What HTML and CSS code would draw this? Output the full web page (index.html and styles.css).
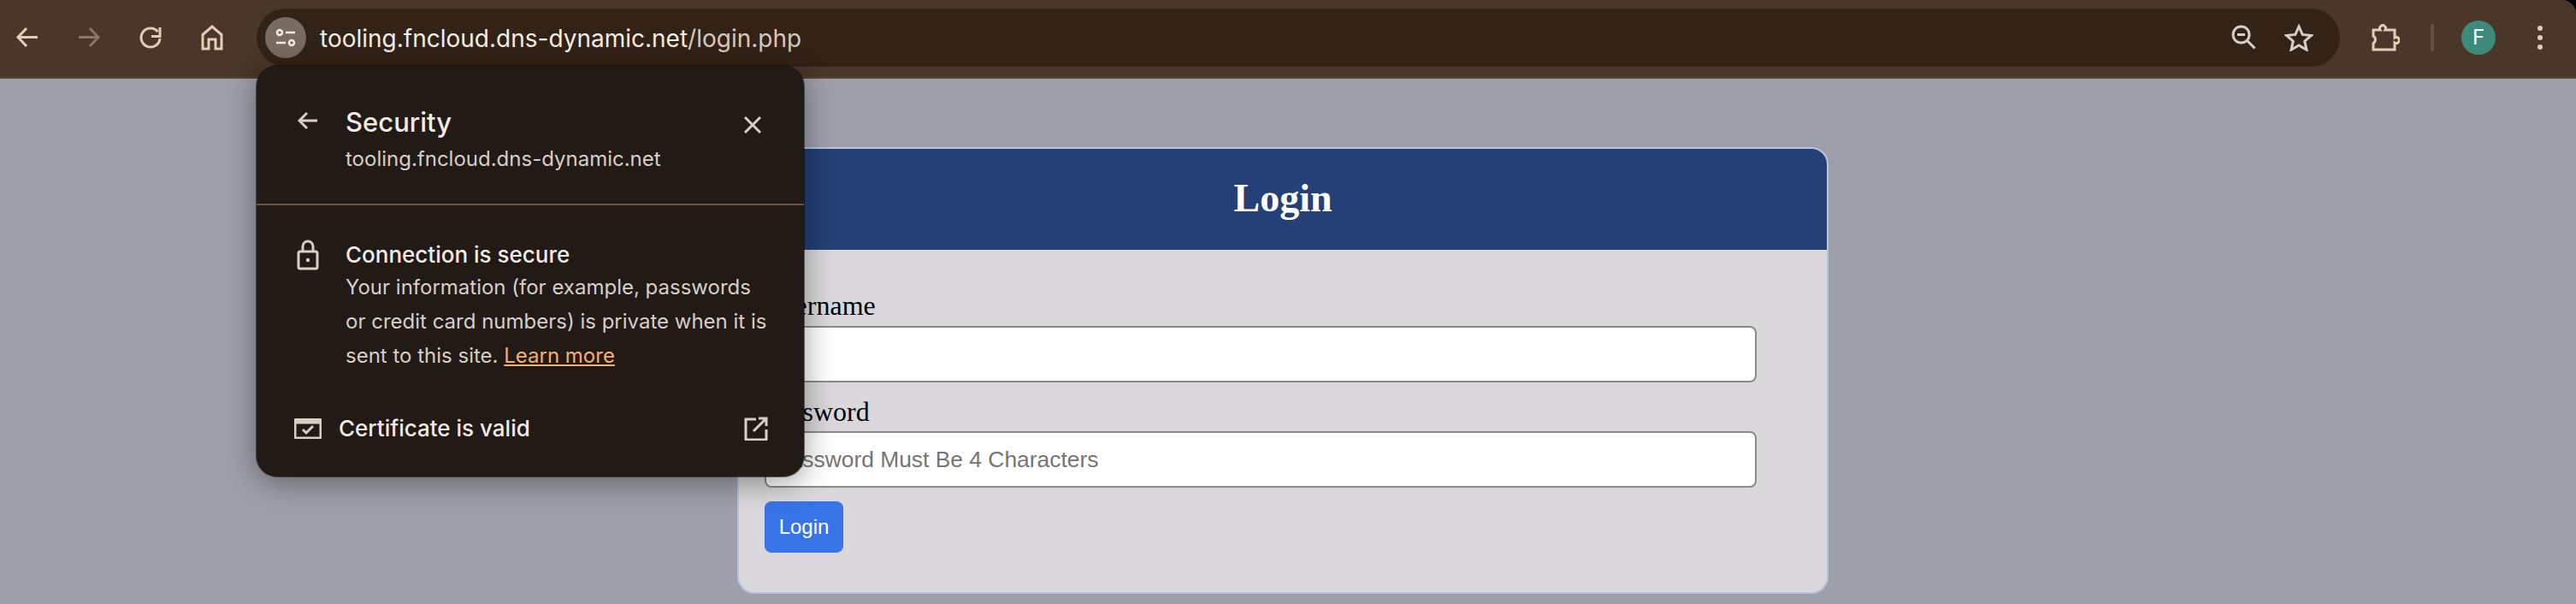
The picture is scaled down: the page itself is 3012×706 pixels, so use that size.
FILE: index.html
```html
<!DOCTYPE html>
<html lang="en">
<head>
<meta charset="utf-8">
<title>Login</title>
<link rel="stylesheet" href="styles.css">
</head>
<body>
<div class="window">
  <header class="toolbar">
    <div class="nav">
      <button class="tool"><svg width="28" height="28" viewBox="0 0 28 28"><path d="M26 13.500H4M13 3 3 13.500 13 24" class="st"/></svg></button>
      <button class="tool dim"><svg width="28" height="28" viewBox="0 0 28 28"><path d="M2 13.500h22M15 3l10 10.500L15 24" class="st"/></svg></button>
      <button class="tool"><svg width="28" height="30" viewBox="0 0 28 30"><path d="M22.500 8A11 11 0 1 0 25 16" class="st"/><path d="M25 3v10.500H15" class="st"/></svg></button>
      <button class="tool"><svg width="28" height="30" viewBox="0 0 28 30"><path d="M3 28V11.500L14 2l11 9.500V28h-7V17h-8v11z" class="st"/></svg></button>
    </div>
    <div class="omnibox">
      <span class="chip"><svg width="26" height="22" viewBox="0 0 26 22"><circle cx="6" cy="5" r="3" class="wh"/><path d="M13 5h11M2 17h11" class="wh"/><circle cx="20" cy="17" r="3" class="wh"/></svg></span>
      <span class="url">tooling.fncloud.dns-dynamic.net<span class="path">/login.php</span></span>
      <span class="omni-actions">
        <svg width="30" height="30" viewBox="0 0 30 30"><circle cx="11.500" cy="11.500" r="9.500" class="wh"/><path d="M7 11.500h9M18.500 18.500l9 9" class="wh"/></svg>
        <svg width="34" height="32" viewBox="0 0 34 32"><path d="m17 3 4.200 9.400 10.300 1-7.800 6.800 2.300 10L17 25l-9 5.200 2.300-10-7.800-6.800 10.300-1z" class="wh"/></svg>
      </span>
    </div>
    <div class="tail">
      <svg width="34" height="34" viewBox="0 0 34 34"><path d="M3 8h8a3.500 3.500 0 1 1 6 0h11v9a3.500 3.500 0 1 1 0 6v8H3v-7.500a5 5 0 0 0 0-8.500z" class="st"/></svg>
      <span class="sep"></span>
      <span class="avatar">F</span>
      <span class="dots"><i></i><i></i><i></i></span>
    </div>
  </header>
  <main class="page">
    <section class="card">
      <h1 class="card-head">Login</h1>
      <form class="card-body">
        <label class="lbl">Username</label>
        <input class="field" type="text">
        <label class="lbl second">Password</label>
        <input class="field pw" type="password" placeholder="Password Must Be 4 Characters">
        <button class="submit" type="button">Login</button>
      </form>
    </section>
  </main>
  <aside class="popup">
    <div class="pop-head">
      <svg class="pop-icon" width="24" height="24" viewBox="0 0 24 24"><path d="M23 12H2M11 3l-9 9 9 9" class="wh"/></svg>
      <div class="pop-title">
        <div class="title">Security</div>
        <div class="host">tooling.fncloud.dns-dynamic.net</div>
      </div>
      <svg class="pop-close" width="22" height="22" viewBox="0 0 22 22"><path d="m2 2 18 18M20 2 2 20" class="wh"/></svg>
    </div>
    <div class="pop-sec">
      <svg class="pop-icon" width="26" height="36" viewBox="0 0 26 36"><path d="M7 14V8a6 6 0 0 1 12 0v6" class="wh"/><rect x="2" y="14" width="22" height="20" rx="2" class="wh"/><circle cx="13" cy="24" r="2.200" fill="#d9cec6"/></svg>
      <div class="sec-text">
        <div class="sec-title">Connection is secure</div>
        <p class="sec-body">Your information (for example, passwords or credit card numbers) is private when it is sent to this site. <a class="learn" href="#">Learn more</a></p>
      </div>
    </div>
    <div class="cert">
      <svg width="32" height="24" viewBox="0 0 32 24"><rect x="1" y="1" width="30" height="22" rx="2" class="wh"/><path d="M1 4h30" class="wh thick"/><path d="m10 13 4 4 8-8" class="wh"/></svg>
      <span class="cert-label">Certificate is valid</span>
      <svg class="cert-open" width="28" height="28" viewBox="0 0 28 28"><path d="M14 3H2v24h24V15" class="wh"/><path d="M11 17 26 2M17 2h9v9" class="wh"/></svg>
    </div>
  </aside>
</div>
</body>
</html>
```
FILE: styles.css
```css
* { box-sizing: border-box; }
html, body { margin: 0; height: 706px; overflow: hidden; }
body { background: #000; }
.window { position: relative; height: 706px; display: flex; flex-direction: column; overflow: hidden; }
.toolbar { height: 92px; flex: none; display: flex; background: #4a3729; border-bottom: 2px solid #54463f; padding: 10px 0 12px; border-radius: 0 16px 0 0; }
.nav { width: 300px; flex: none; display: flex; padding-left: 14px; gap: 36px; align-items: center; }
.tool { width: 36px; height: 36px; padding: 0; background: none; border: 0; display: flex; align-items: center; justify-content: center; }
.tool.dim { opacity: .42; }
.st { fill: none; stroke: #e6ccb7; stroke-width: 3; }
.wh { fill: none; stroke: #d9cec6; stroke-width: 3; }
.wh.thick { stroke-width: 5; }
.omnibox { width: 2436px; height: 68px; background: #332216; border-radius: 34px; display: flex; align-items: center; padding: 0 31px 0 10px; }
.chip { width: 48px; height: 48px; border-radius: 50%; background: #7a6b60; display: flex; align-items: center; justify-content: center; }
.chip .wh { stroke: #f1e9e3; stroke-width: 2.500; }
.url { margin-left: 16px; font: 28px/36px Inter, "Liberation Sans", sans-serif; color: #f5ede7; padding-top: 2px; }
.path { color: #d5c9c1; }
.omni-actions { margin-left: auto; display: flex; align-items: center; gap: 32px; }
.tail { flex: 1; display: flex; align-items: center; padding-left: 36px; }
.sep { width: 4px; height: 32px; background: #65503f; border-radius: 2px; margin-left: 36px; }
.avatar { width: 40px; height: 40px; border-radius: 50%; background: #3d8a7c; color: #fff; font: 24px/40px Inter, sans-serif; text-align: center; margin-left: 32px; }
.dots { display: flex; flex-direction: column; gap: 5px; margin-left: 49px; }
.dots i { width: 6px; height: 6px; border-radius: 50%; background: #e6ccb7; display: block; }
.page { flex: 1; background: #9f9fab; padding: 80px 0 0 862px; overflow: hidden; }
.card { width: 1276px; height: 522px; background: #dad8da; border: 2px solid #b3c6e2; border-radius: 20px; overflow: hidden; }
.card-head { margin: 0; height: 118px; background: #254076; color: #fff; font: bold 46px/116px "Liberation Serif", serif; text-align: center; }
.card-body { display: flex; flex-direction: column; align-items: flex-start; padding: 47px 0 0 30px; }
.lbl { font: 32px/37px "Liberation Serif", serif; color: #000; height: 37px; }
.lbl.second { margin-top: 16px; }
.field { width: 1160px; height: 66px; margin-top: 5px; background: #fff; border: 2px solid #8a8a8a; border-radius: 8px; padding: 0 10px; font: 26.400px "Liberation Sans", Arial, sans-serif; }
.field.pw { margin-top: 4px; }
.field::placeholder { color: #757575; opacity: 1; }
.submit { margin-top: 16px; width: 92px; height: 60px; background: #3874e8; color: #fff; border: 0; border-radius: 8px; padding: 0; font: 24px "Liberation Sans", Arial, sans-serif; }
.popup { position: absolute; left: 300px; top: 77px; width: 640px; height: 480px; background: #211a17; border-radius: 24px; box-shadow: 0 0 0 1px rgba(0,0,0,.5), 0 6px 36px rgba(0,0,0,.4); font-family: Inter, "Liberation Sans", sans-serif; }
.pop-head { height: 163px; display: flex; align-items: flex-start; border-bottom: 2px solid #6b5443; padding: 52px 48px 0 48px; position: relative; }
.pop-icon { flex: none; }
.pop-title { margin-left: 32px; }
.title { font-size: 31px; line-height: 36px; font-weight: 500; color: #f3ebe5; margin-top: -4px; }
.host { font-size: 24px; line-height: 30px; color: #d9cec6; margin-top: 10px; }
.pop-close { margin-left: auto; margin-top: 6px; margin-right: 1px; }
.pop-sec { display: flex; padding: 40px 24px 0 47px; }
.sec-text { margin-left: 31px; }
.sec-title { font-size: 26px; line-height: 36px; font-weight: 500; color: #f3ebe5; }
.sec-body { margin: 0; width: 498px; font-size: 24px; line-height: 40px; color: #d9cec6; }
.learn { color: #f5b06f; }
.cert { display: flex; align-items: center; padding: 47px 42px 0 44px; }
.cert-label { margin-left: 20px; font-size: 26px; line-height: 36px; font-weight: 500; color: #f3ebe5; }
.cert-open { margin-left: auto; }
```
